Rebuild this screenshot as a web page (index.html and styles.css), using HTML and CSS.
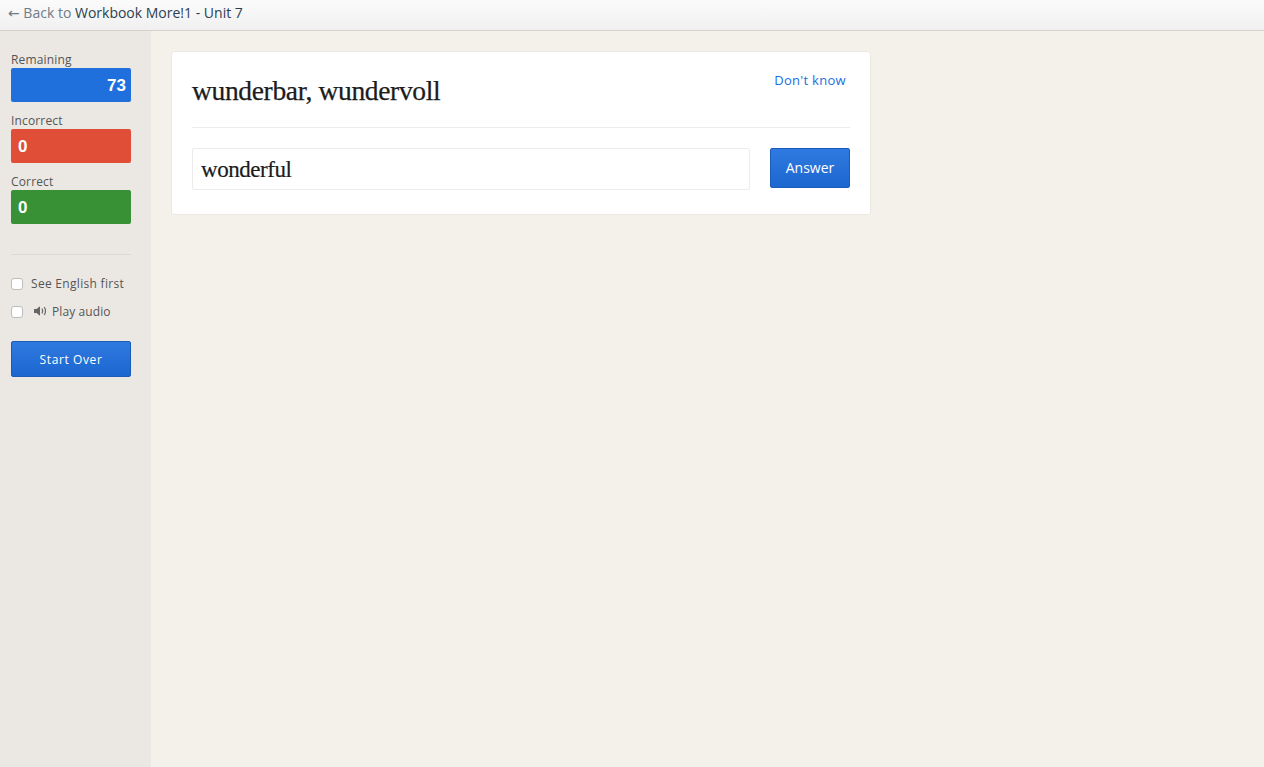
FILE: index.html
```html
<!DOCTYPE html>
<html lang="en">
<head>
    <meta charset="UTF-8">
    <meta name="viewport" content="width=device-width, initial-scale=1.0">
    <title>Learn - Workbook More!1 - Unit 7</title>
    <link rel="stylesheet" href="styles.css">
</head>
<body>
    <nav class="top-bar">
        <a class="back-link" href="#"><span class="back-muted"><span class="back-arrow">&larr;</span> Back to</span> Workbook More!1 - Unit 7</a>
    </nav>

    <div class="page">
        <div class="sidebar">
            <div class="stat">
                <div class="stat-label">Remaining</div>
                <div class="stat-box stat-remaining">73</div>
            </div>
            <div class="stat">
                <div class="stat-label">Incorrect</div>
                <div class="stat-box stat-incorrect">0</div>
            </div>
            <div class="stat">
                <div class="stat-label">Correct</div>
                <div class="stat-box stat-correct">0</div>
            </div>

            <hr class="side-rule">

            <label class="option">
                <input type="checkbox">
                <span>See English first</span>
            </label>
            <label class="option">
                <input type="checkbox">
                <svg class="audio-icon" width="15" height="12" viewBox="0 0 15 12">
                    <path d="M1 4h2.500L7 1.200v9.600L3.500 8H1z" fill="#666"/>
                    <path d="M9 3.500q1.400 2.500 0 5M11.300 2q2.400 4 0 8" fill="none" stroke="#666" stroke-width="1.200"/>
                </svg>
                <span class="audio-label">Play audio</span>
            </label>

            <button class="btn btn-side" type="button">Start Over</button>
        </div>

        <div class="main-content">
            <div class="card">
                <div class="card-head">
                    <h1 class="prompt">wunderbar, wundervoll</h1>
                    <a class="dont-know" href="#">Don't know</a>
                </div>
                <form class="answer-row">
                    <input class="answer-input" type="text" value="wonderful">
                    <button class="btn btn-answer" type="button">Answer</button>
                </form>
            </div>
        </div>
    </div>
</body>
</html>
```

FILE: styles.css
```css
/* Basic styling */
* {
    margin: 0;
    padding: 0;
    box-sizing: border-box;
}

body {
    height: 767px;
    overflow: hidden;
    font-family: "Open Sans", "Noto Sans", sans-serif;
    color: #444;
    background-color: #f4f1ea;
}

.top-bar {
    height: 31px;
    padding: 4px 8px 0;
    background: linear-gradient(#fbfbfb, #f0f0f0);
    border-bottom: 1px solid #d4d0ca;
    font-size: 14px;
    line-height: 18px;
}

.back-link {
    color: #2c3e50;
    text-decoration: none;
}

.back-muted {
    color: #6f7b88;
}

.back-arrow {
    font-family: "DejaVu Sans", sans-serif;
    font-size: 14px;
}

.page {
    display: flex;
    height: 736px;
}

.sidebar {
    width: 151px;
    padding: 20px 20px 0 11px;
    background-color: #ebe8e3;
}

.stat {
    margin-bottom: 10px;
}

.stat-label {
    font-size: 12px;
    letter-spacing: 0.15px;
    line-height: 17px;
    color: #555;
}

.stat-box {
    height: 34px;
    padding: 0 5px 0 7px;
    border-radius: 2px;
    color: white;
    font-family: "Liberation Sans", Arial, sans-serif;
    font-size: 17px;
    font-weight: bold;
    line-height: 35px;
}

.stat-remaining {
    background-color: #1f6fdc;
    text-align: right;
}

.stat-incorrect {
    background-color: #e14e38;
}

.stat-correct {
    background-color: #389135;
}

.side-rule {
    margin: 30px 0 19px;
    border: none;
    border-top: 1px solid #dcd9d3;
}

.option {
    display: flex;
    align-items: center;
    height: 18px;
    margin-bottom: 10px;
    font-size: 12px;
    letter-spacing: 0.3px;
    color: #555;
}

.option input {
    appearance: none;
    width: 12px;
    height: 12px;
    margin: 2px 8px 0 0;
    background: white;
    border: 1px solid #bdbdbd;
    border-radius: 3px;
}

.audio-icon {
    margin: 0 4px 0 2px;
}

.audio-label {
    letter-spacing: 0.1px;
}

.btn {
    border: 1px solid #1a5cb8;
    border-radius: 2px;
    background: linear-gradient(#2f7ae0, #1c66d0);
    color: white;
    font-family: "Open Sans", "Noto Sans", sans-serif;
    font-size: 14px;
    cursor: pointer;
}

.btn-side {
    display: block;
    width: 120px;
    height: 36px;
    margin-top: 21px;
    font-size: 12px;
    letter-spacing: 0.6px;
}

.main-content {
    flex-grow: 1;
    padding: 20px;
}

.card {
    width: 700px;
    height: 164px;
    padding: 0 20px;
    background-color: white;
    border: 1px solid #ebe8e2;
    border-radius: 3px;
}

.card-head {
    display: flex;
    justify-content: space-between;
    height: 76px;
    padding-top: 22px;
    border-bottom: 1px solid #ececec;
}

.prompt {
    font-family: "Liberation Serif", Georgia, serif;
    font-size: 27.5px;
    font-weight: normal;
    letter-spacing: -0.34px;
    line-height: 34px;
    color: #1c1c1c;
    -webkit-text-stroke: 0.25px #1c1c1c;
}

.dont-know {
    margin: -3px 4px 0 0;
    font-size: 13px;
    letter-spacing: 0.3px;
    line-height: 18px;
    color: #1a6fe0;
    text-decoration: none;
}

.answer-row {
    display: flex;
    justify-content: space-between;
    padding-top: 20px;
}

.answer-input {
    width: 558px;
    height: 42px;
    padding: 1px 8px 0;
    border: 1px solid #ececec;
    border-radius: 2px;
    font-family: "Liberation Serif", Georgia, serif;
    font-size: 23px;
    letter-spacing: -0.45px;
    color: #1c1c1c;
    -webkit-text-stroke: 0.2px #1c1c1c;
}

.btn-answer {
    width: 80px;
    height: 40px;
    padding-bottom: 2px;
}
```
